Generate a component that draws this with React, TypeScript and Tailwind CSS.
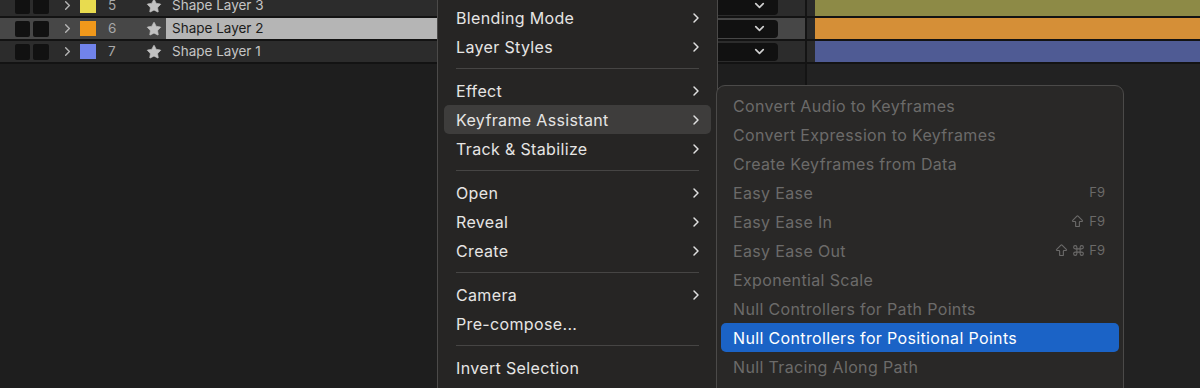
import React from "react";
import { Star, ChevronRight, ChevronDown, ArrowBigUp, Command } from "lucide-react";

const layers = [
  { num: 5, name: "Shape Layer 3", swatch: "bg-[#e8db4f]", bar: "bg-[#8d8a46]" },
  { num: 6, name: "Shape Layer 2", swatch: "bg-[#f0981b]", bar: "bg-[#d58f37]", selected: true },
  { num: 7, name: "Shape Layer 1", swatch: "bg-[#7183ea]", bar: "bg-[#4f5b94]" },
];

type MenuItem =
  | { kind: "item"; label: string; sub?: boolean; active?: boolean }
  | { kind: "sep" };

const mainMenu: MenuItem[] = [
  { kind: "item", label: "Blending Mode", sub: true },
  { kind: "item", label: "Layer Styles", sub: true },
  { kind: "sep" },
  { kind: "item", label: "Effect", sub: true },
  { kind: "item", label: "Keyframe Assistant", sub: true, active: true },
  { kind: "item", label: "Track & Stabilize", sub: true },
  { kind: "sep" },
  { kind: "item", label: "Open", sub: true },
  { kind: "item", label: "Reveal", sub: true },
  { kind: "item", label: "Create", sub: true },
  { kind: "sep" },
  { kind: "item", label: "Camera", sub: true },
  { kind: "item", label: "Pre-compose..." },
  { kind: "sep" },
  { kind: "item", label: "Invert Selection" },
];

const subMenu: { label: string; shortcut?: "f9" | "shift" | "shiftcmd"; active?: boolean }[] = [
  { label: "Convert Audio to Keyframes" },
  { label: "Convert Expression to Keyframes" },
  { label: "Create Keyframes from Data" },
  { label: "Easy Ease", shortcut: "f9" },
  { label: "Easy Ease In", shortcut: "shift" },
  { label: "Easy Ease Out", shortcut: "shiftcmd" },
  { label: "Exponential Scale" },
  { label: "Null Controllers for Path Points" },
  { label: "Null Controllers for Positional Points", active: true },
  { label: "Null Tracing Along Path" },
];

function Shortcut({ type }: { type: "f9" | "shift" | "shiftcmd" }) {
  return (
    <span className="flex items-center gap-[3px] text-[13px] tracking-normal text-[#6b6a69]">
      {type !== "f9" && <ArrowBigUp className="h-[15px] w-[15px]" strokeWidth={1.8} />}
      {type === "shiftcmd" && <Command className="h-[13px] w-[13px]" strokeWidth={2} />}
      <span className="ml-[1px]">F9</span>
    </span>
  );
}

function LayerRow({ layer }: { layer: (typeof layers)[number] }) {
  const rowBg = layer.selected ? "bg-[#474747]" : "bg-[#2c2c2c]";
  return (
    <div className="flex h-[23px] border-b-2 border-[#131313]">
      <div className={`flex w-[805px] items-center ${rowBg}`}>
        <div className="flex gap-[3px] pl-[15px]">
          <div className="h-4 w-[15px] rounded-[2px] bg-[#111]" />
          <div className="h-4 w-4 rounded-[2px] bg-[#111]" />
        </div>
        <ChevronRight className="ml-[11px] h-[15px] w-[15px] text-[#b5b5b5]" strokeWidth={2.2} />
        <div className={`ml-[5px] h-[15px] w-4 ${layer.swatch}`} />
        <span className="ml-[12px] w-[38px] text-[13.5px] text-[#a9a9a9]">{layer.num}</span>
        <Star className="h-4 w-4 fill-[#c2c2c2] text-[#c2c2c2]" strokeWidth={1} />
        <div
          className={`ml-[4px] flex h-full flex-1 items-center pl-[6px] text-[13.5px] ${
            layer.selected ? "bg-[#b5b5b5] text-[#1b1b1b]" : "text-[#c5c5c5]"
          }`}
        >
          {layer.name}
        </div>
        <div className="flex h-[18px] w-[61px] items-center justify-end rounded-r-[4px] bg-[#111] pr-[11px]">
          <ChevronDown className="h-[15px] w-[15px] text-[#d0d0d0]" strokeWidth={2.6} />
        </div>
        <div className="w-[27px]" />
      </div>
      <div className="w-[2px] bg-[#141414]" />
      <div className="w-[8px] bg-[#2a2a2a]" />
      <div className={`flex-1 ${layer.bar}`} />
    </div>
  );
}

export default function App() {
  return (
    <div
      className="relative h-[388px] w-[1200px] overflow-hidden bg-[#1e1e1e]"
      style={{ fontFamily: "Inter, 'Liberation Sans', sans-serif" }}
    >
      {/* Layer stack */}
      <div className="-mt-[5px] flex h-[393px] flex-col">
        {layers.map((l) => (
          <LayerRow key={l.num} layer={l} />
        ))}
        <div className="flex flex-1">
          <div className="w-[805px] bg-[#1e1e1e]" />
          <div className="w-[2px] bg-[#141414]" />
          <div className="flex-1 bg-[#222222]" />
        </div>
      </div>

      {/* Context menu */}
      <div className="absolute left-[437px] top-[-10px] h-[410px] w-[281px] rounded-[8px] border border-[#4b4a49] bg-[#262524] px-[6px] pt-[12px]">
        {mainMenu.map((item, i) =>
          item.kind === "sep" ? (
            <div key={i} className="flex h-[15px] items-center px-[12px]">
              <div className="h-px w-full bg-[#464544]" />
            </div>
          ) : (
            <div
              key={i}
              className={`flex h-[29px] items-center justify-between rounded-[5px] pl-[12px] pr-[7px] text-[16px] tracking-[0.35px] text-[#e6e5e4] ${
                item.active ? "bg-[#3e3d3c]" : ""
              }`}
            >
              <span>{item.label}</span>
              {item.sub && <ChevronRight className="h-4 w-4 text-[#e0e0e0]" strokeWidth={2.2} />}
            </div>
          ),
        )}
      </div>

      {/* Submenu */}
      <div className="absolute left-[716px] top-[85px] h-[330px] w-[408px] rounded-[9px] border border-[#4b4a49] bg-[#292827] px-[4px] pt-[5px]">
        {subMenu.map((item) => (
          <div
            key={item.label}
            className={`flex h-[29px] items-center justify-between rounded-[5px] pl-[12px] pr-[14px] text-[16px] tracking-[0.35px] ${
              item.active ? "bg-[#1b63c6] text-white" : "text-[#6c6b6a]"
            }`}
          >
            <span>{item.label}</span>
            {item.shortcut && <Shortcut type={item.shortcut} />}
          </div>
        ))}
      </div>
    </div>
  );
}
